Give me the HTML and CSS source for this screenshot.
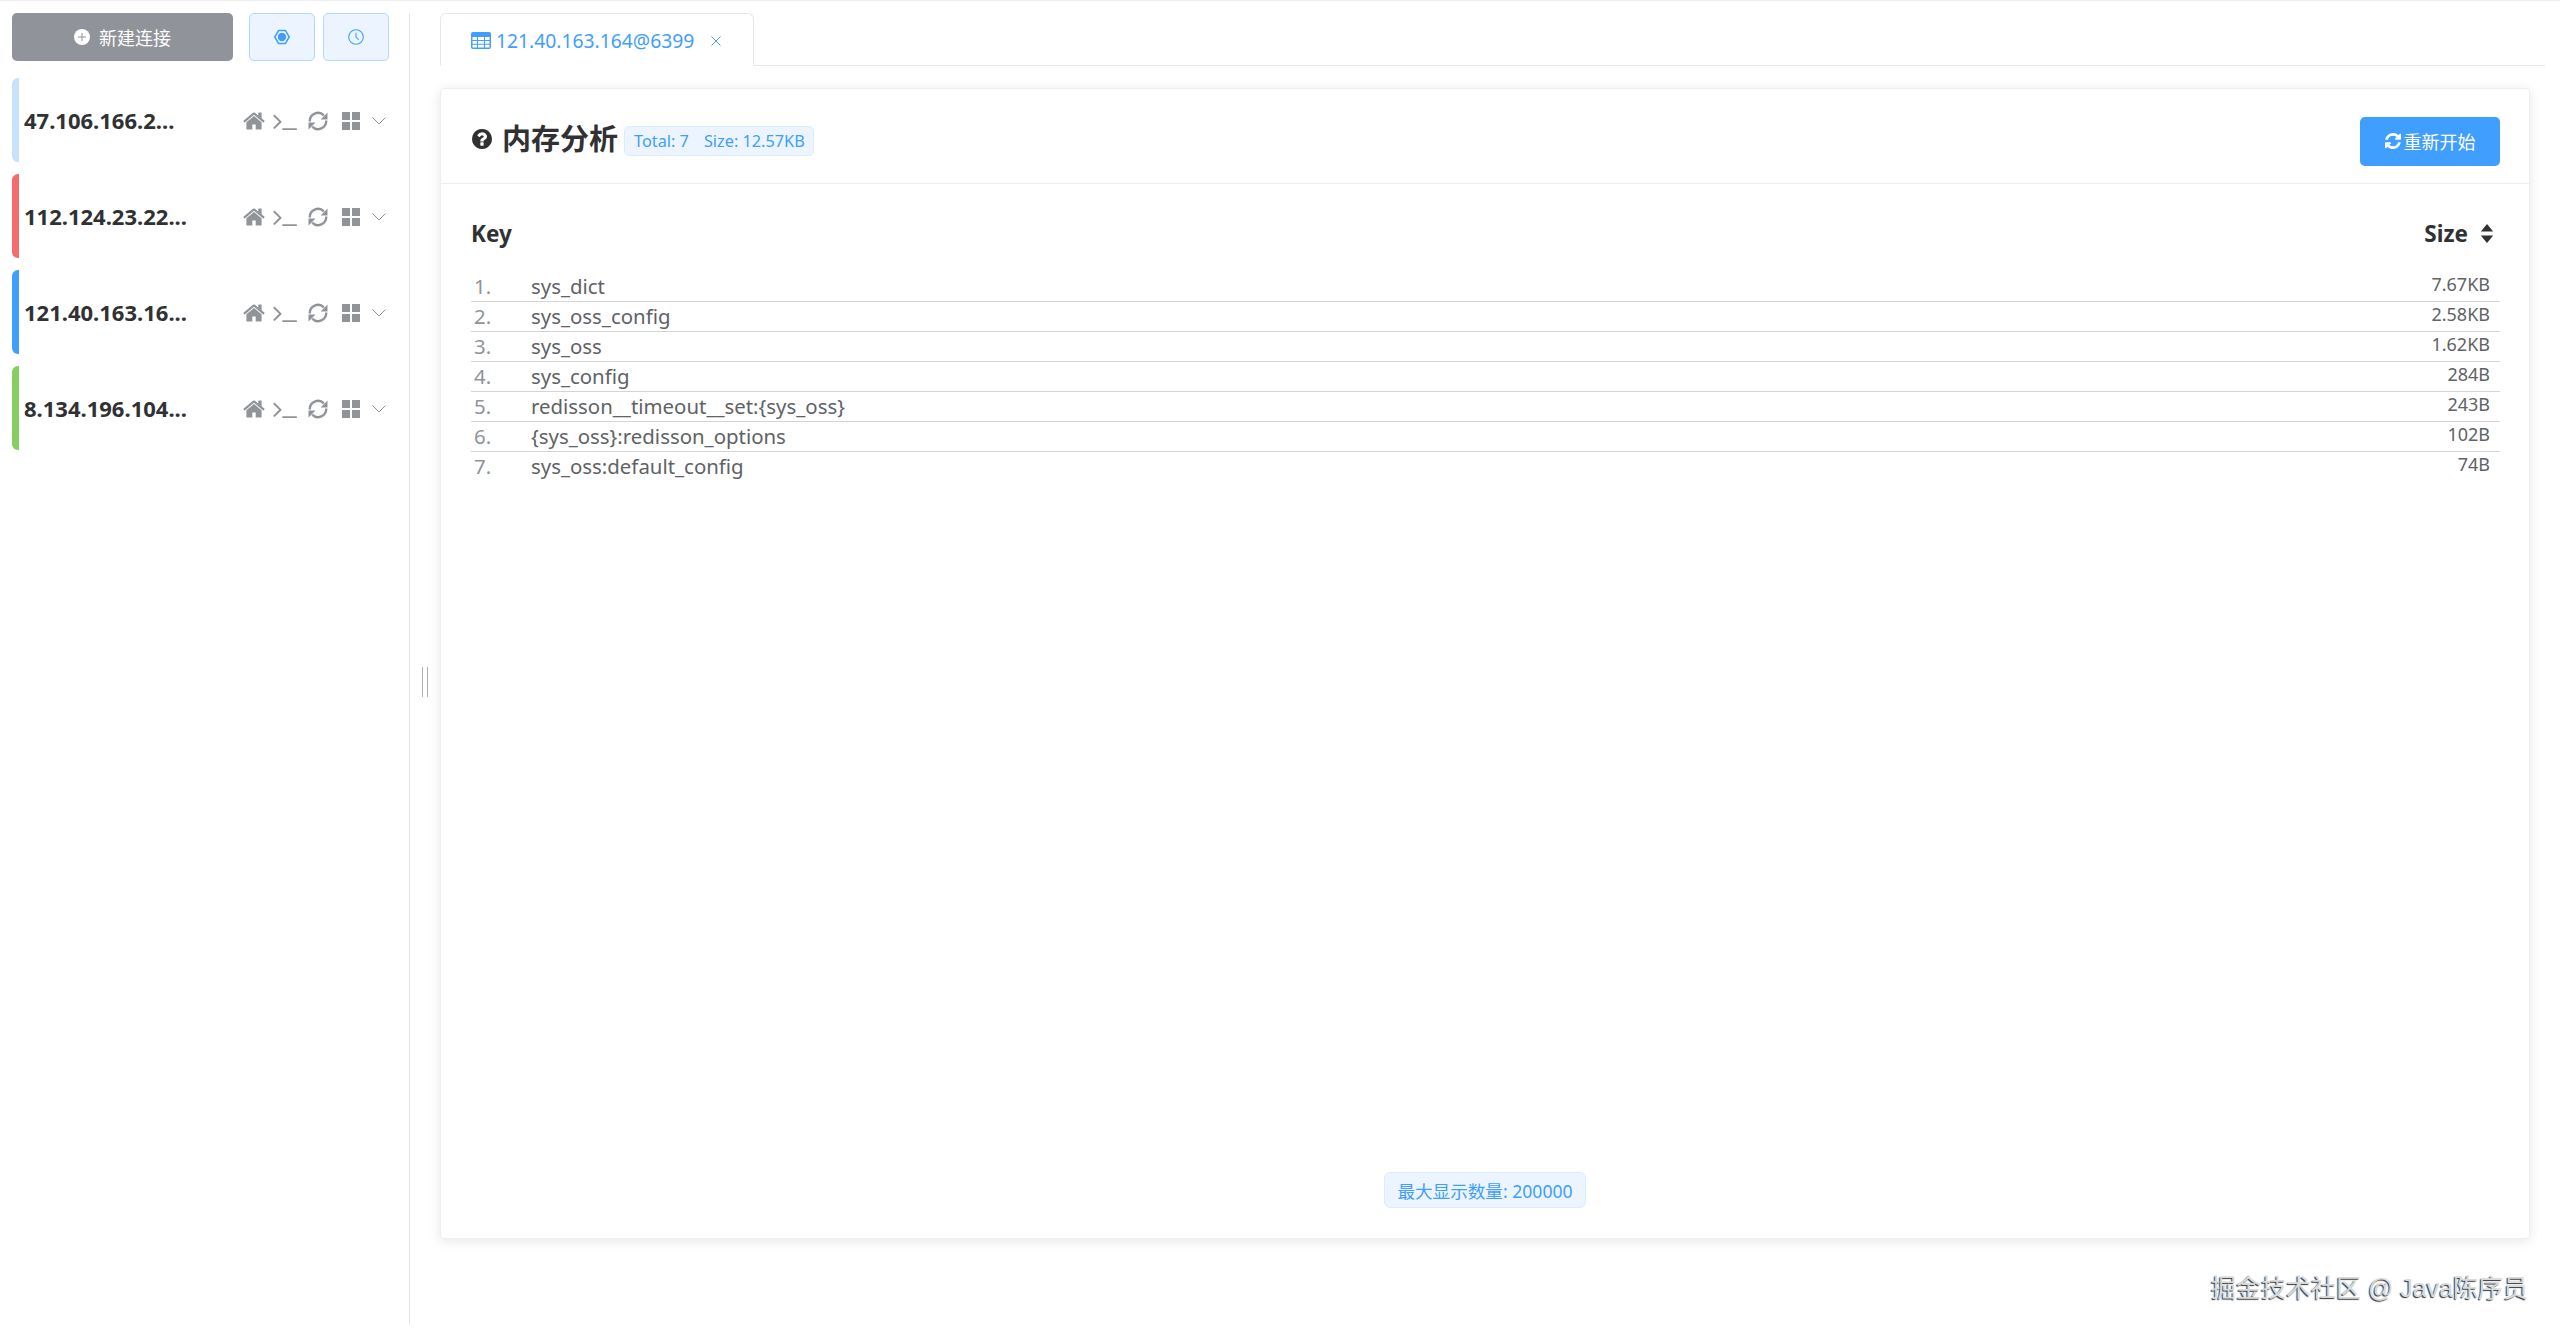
FILE: index.html
```html
<!DOCTYPE html>
<html lang="zh-CN">
<head>
<meta charset="utf-8">
<title>内存分析</title>
<link rel="stylesheet" href="styles.css">
</head>
<body>
<svg class="sprite" aria-hidden="true">
  <symbol id="i-home" viewBox="0 0 1664 1792"><path d="M1408 992v480q0 26-19 45t-45 19h-384v-384h-256v384h-384q-26 0-45-19t-19-45v-480q0-1 .5-3t.5-3l575-474 575 474q1 2 1 6zm223-69l-62 74q-8 9-21 11h-3q-13 0-21-7l-692-577-692 577q-12 8-24 7-13-2-21-11l-62-74q-8-10-7-23.500t11-21.500l719-599q32-26 76-26t76 26l244 204v-195q0-14 9-23t23-9h192q14 0 23 9t9 23v408l219 182q10 8 11 21.500t-7 23.500z"/></symbol>
  <symbol id="i-term" viewBox="0 200 1664 1400"><path d="M585 983l-466 466q-10 10-23 10t-23-10l-50-50q-10-10-10-23t10-23l393-393-393-393q-10-10-10-23t10-23l50-50q10-10 23-10t23 10l466 466q10 10 10 23t-10 23zm1079 457v64q0 14-9 23t-23 9h-960q-14 0-23-9t-9-23v-64q0-14 9-23t23-9h960q14 0 23 9t9 23z"/></symbol>
  <symbol id="i-reload" viewBox="0 0 20 20"><path d="M1.800 10.500A8.200 8.200 0 0 1 15.800 4.300M18.200 9.500A8.200 8.200 0 0 1 4.200 15.700" fill="none" stroke="currentColor" stroke-width="2.400"/><path d="M19.500 1.500v7h-7zM.5 18.500v-7h7z"/></symbol>
  <symbol id="i-grid" viewBox="0 0 18 18"><path d="M0 0h8v8H0zM10 0h8v8h-8zM0 10h8v8H0zM10 10h8v8h-8z"/></symbol>
  <symbol id="i-chev" viewBox="0 0 14 8"><path d="M.5.500L7 7l6.500-6.500" fill="none" stroke="currentColor" stroke-width="1"/></symbol>
  <symbol id="i-sync" viewBox="0 128 1536 1536"><path d="M1511 1056q0 5-1 7-64 268-268 434.500t-478 166.500q-146 0-282.500-55t-243.500-157l-129 129q-19 19-45 19t-45-19-19-45v-448q0-26 19-45t45-19h448q26 0 45 19t19 45-19 45l-137 137q71 66 161 102t187 36q134 0 250-65t186-179q11-17 53-117 8-23 30-23h192q13 0 22.500 9.500t9.500 22.500zm25-800v448q0 26-19 45t-45 19h-448q-26 0-45-19t-19-45 19-45l138-138q-148-137-349-137-134 0-250 65t-186 179q-11 17-53 117-8 23-30 23h-199q-13 0-22.500-9.500t-9.500-22.500v-7q65-268 270-434.500t480-166.500q146 0 284 55.500t245 156.500l130-129q19-19 45-19t45 19 19 45z"/></symbol>
</svg>
<div class="app">
  <aside class="sidebar">
    <div class="toolbar">
      <button class="btn-new">
        <svg class="ic-plus" viewBox="0 0 16 16"><circle cx="8" cy="8" r="8" fill="#fff"/><path d="M8 4v8M4 8h8" stroke="#909399" stroke-width="1"/></svg>
        <span>新建连接</span>
      </button>
      <button class="btn-light">
        <svg class="ic-16" viewBox="0 0 16 16"><path d="M4.500 1.600h7L15.200 8l-3.700 6.400h-7L.800 8z" fill="none" stroke="#409eff" stroke-width="1.500" stroke-linejoin="round"/><circle cx="8" cy="8" r="4.200" fill="#409eff"/></svg>
      </button>
      <button class="btn-light">
        <svg class="ic-16" viewBox="0 0 16 16" fill="none" stroke="#409eff" stroke-width="1.100"><circle cx="8" cy="8" r="7.300"/><path d="M8 3.800V8.300L10.800 10.600"/></svg>
      </button>
    </div>
    <div class="conn c-sky">
      <span class="conn-name">47.106.166.2...</span>
      <div class="acts"><svg class="a-home"><use href="#i-home"/></svg><svg class="a-term"><use href="#i-term"/></svg><svg class="a-reload"><use href="#i-reload"/></svg><svg class="a-grid"><use href="#i-grid"/></svg><svg class="a-chev"><use href="#i-chev"/></svg></div>
    </div>
    <div class="conn c-red">
      <span class="conn-name">112.124.23.22...</span>
      <div class="acts"><svg class="a-home"><use href="#i-home"/></svg><svg class="a-term"><use href="#i-term"/></svg><svg class="a-reload"><use href="#i-reload"/></svg><svg class="a-grid"><use href="#i-grid"/></svg><svg class="a-chev"><use href="#i-chev"/></svg></div>
    </div>
    <div class="conn c-blue">
      <span class="conn-name">121.40.163.16...</span>
      <div class="acts"><svg class="a-home"><use href="#i-home"/></svg><svg class="a-term"><use href="#i-term"/></svg><svg class="a-reload"><use href="#i-reload"/></svg><svg class="a-grid"><use href="#i-grid"/></svg><svg class="a-chev"><use href="#i-chev"/></svg></div>
    </div>
    <div class="conn c-green">
      <span class="conn-name">8.134.196.104...</span>
      <div class="acts"><svg class="a-home"><use href="#i-home"/></svg><svg class="a-term"><use href="#i-term"/></svg><svg class="a-reload"><use href="#i-reload"/></svg><svg class="a-grid"><use href="#i-grid"/></svg><svg class="a-chev"><use href="#i-chev"/></svg></div>
    </div>
  </aside>
  <div class="resizer"><i></i></div>
  <main class="main">
    <div class="tabs">
      <div class="tab">
        <svg class="ic-table" viewBox="0 0 20 17"><path fill-rule="evenodd" d="M2 0h16a2 2 0 0 1 2 2v13a2 2 0 0 1-2 2H2a2 2 0 0 1-2-2V2a2 2 0 0 1 2-2zM1.500 5v3h4.500V5zM7 5v3h6V5zM14 5v3h4.500V5zM1.500 9v2.800h4.500V9zM7 9v2.800h6V9zM14 9v2.800h4.500V9zM1.500 12.800v2.700h4.500v-2.700zM7 12.800v2.700h6v-2.700zM14 12.800v2.700h4.500v-2.700z"/></svg>
        <span class="tab-text">121.40.163.164@6399</span>
        <svg class="ic-close" viewBox="0 0 10 10"><path d="M.5.500l9 9M9.500.500l-9 9" stroke="currentColor" stroke-width="1" fill="none"/></svg>
      </div>
    </div>
    <section class="card">
      <header class="card-head">
        <div class="title">
          <svg class="ic-help" viewBox="128 128 1536 1536"><path d="M1024 1376v-192q0-14-9-23t-23-9h-192q-14 0-23 9t-9 23v192q0 14 9 23t23 9h192q14 0 23-9t9-23zm256-672q0-88-55.500-163t-138.500-116-170-41q-243 0-371 213-15 24 8 42l132 100q7 6 19 6 16 0 25-12 53-68 86-92 34-24 86-24 48 0 85.500 26t37.500 59q0 38-20 61t-68 45q-63 28-115.500 86.500t-52.500 125.500v36q0 14 9 23t23 9h192q14 0 23-9t9-23q0-19 21.500-49.500t54.500-49.500q32-18 49-28.500t46-35 44.500-48 28-60.500 12.500-81zm384 192q0 209-103 385.500t-279.500 279.500-385.500 103-385.500-103-279.500-279.500-103-385.500 103-385.500 279.500-279.500 385.500-103 385.500 103 279.500 279.500 103 385.500z"/></svg>
          <h1>内存分析</h1>
          <span class="tag tag-total"><span>Total: 7</span><span>Size: 12.57KB</span></span>
        </div>
        <button class="btn-primary"><svg class="ic-sync"><use href="#i-sync"/></svg><span>重新开始</span></button>
      </header>
      <div class="card-body">
        <div class="thead">
          <span>Key</span>
          <span class="th-size">Size<svg class="ic-sort" viewBox="0 0 14 20"><path d="M7 0l6.500 8H.5zM7 20L.5 12h13z"/></svg></span>
        </div>
        <ol class="rows">
          <li class="row"><span class="num">1.</span><span class="key">sys_dict</span><span class="size">7.67KB</span></li>
          <li class="row"><span class="num">2.</span><span class="key">sys_oss_config</span><span class="size">2.58KB</span></li>
          <li class="row"><span class="num">3.</span><span class="key">sys_oss</span><span class="size">1.62KB</span></li>
          <li class="row"><span class="num">4.</span><span class="key">sys_config</span><span class="size">284B</span></li>
          <li class="row"><span class="num">5.</span><span class="key">redisson__timeout__set:{sys_oss}</span><span class="size">243B</span></li>
          <li class="row"><span class="num">6.</span><span class="key">{sys_oss}:redisson_options</span><span class="size">102B</span></li>
          <li class="row"><span class="num">7.</span><span class="key">sys_oss:default_config</span><span class="size">74B</span></li>
        </ol>
      </div>
      <div class="card-foot"><span class="tag tag-max">最大显示数量: 200000</span></div>
    </section>
  </main>
</div>
<div class="watermark">掘金技术社区 @ Java陈序员</div>
</body>
</html>
```
FILE: styles.css
```css
* { box-sizing: border-box; }
html, body { margin: 0; padding: 0; background: #fff; }
body {
  font-family: "Noto Sans", "Noto Sans CJK SC", sans-serif;
  color: #303133;
  border-top: 1px solid #eeeeee;
  height: 1335px;
  overflow: hidden;
  position: relative;
}
.sprite { display: none; }
button { font-family: inherit; cursor: pointer; margin: 0; padding: 0; }

.app { display: flex; height: 1334px; }

.sidebar {
  width: 410px;
  flex: none;
  margin-top: 12px;
  height: 1312px;
  padding-left: 12px;
  padding-right: 20px;
  border-right: 1px solid #e6e6e6;
}
.toolbar { display: flex; height: 48px; margin-bottom: 17px; }
.btn-new {
  width: 221px;
  height: 48px;
  background: #909399;
  border: 0;
  border-radius: 5px;
  color: #fff;
  font-size: 18px;
  display: flex;
  align-items: center;
  justify-content: center;
  gap: 9px;
  margin-right: 16px;
}
.ic-plus { width: 16px; height: 16px; }
.btn-light {
  width: 66px;
  height: 48px;
  background: #ecf5ff;
  border: 1px solid #b3d8ff;
  border-radius: 5px;
  margin-right: 8px;
  display: flex;
  align-items: center;
  justify-content: center;
}
.btn-light:last-child { margin-right: 0; }
.ic-16 { width: 16px; height: 16px; }

.conn {
  height: 84px;
  margin-bottom: 12px;
  border-left: 7px solid #ccc;
  border-radius: 6px 0 0 6px;
  display: flex;
  align-items: center;
  padding-left: 5px;
}
.c-sky { border-left-color: #c6e2ff; }
.c-red { border-left-color: #f56c6c; }
.c-blue { border-left-color: #409eff; }
.c-green { border-left-color: #85ce61; }
.conn-name { font-size: 22px; font-weight: 700; color: #303133; white-space: nowrap; }
.acts { margin-left: auto; display: flex; align-items: center; color: #909399; fill: #909399; padding: 1px 3px 0 0; }
.a-home { width: 22px; height: 24px; margin-right: 8px; }
.a-term { width: 24px; height: 20px; margin-right: 11px; }
.a-reload { width: 20px; height: 20px; margin-right: 14px; }
.a-grid { width: 18px; height: 18px; margin-right: 12px; }
.a-chev { width: 14px; height: 8px; }

.resizer { width: 30px; flex: none; display: flex; align-items: center; justify-content: center; padding-top: 28px; }
.resizer i {
  display: block;
  width: 6px;
  height: 30px;
  margin-left: -1px;
  border-left: 1px solid #b0b0b0;
  border-right: 1px solid #b0b0b0;
}

.main { flex: 1; min-width: 0; padding: 12px 15px 0 0; display: flex; flex-direction: column; }
.tabs { height: 53px; border-bottom: 1px solid #e4e7ed; display: flex; margin-bottom: 22px; flex: none; }
.tab {
  width: 314px;
  height: 53px;
  border: 1px solid #e4e7ed;
  border-bottom: 1px solid #fff;
  border-radius: 6px 6px 0 0;
  display: flex;
  align-items: center;
  padding-left: 30px;
  padding-top: 2px;
  color: #409eff;
  fill: #409eff;
}
.ic-table { width: 20px; height: 17px; margin-right: 5px; }
.tab-text { font-size: 19.3px; }
.ic-close { width: 10px; height: 10px; margin-left: 17px; }

.card {
  width: 2090px;
  height: 1151px;
  flex: none;
  border: 1px solid #ebeef5;
  border-radius: 4px;
  box-shadow: 0 2px 12px rgba(0, 0, 0, .1);
  display: flex;
  flex-direction: column;
}
.card-head {
  height: 95px;
  flex: none;
  border-bottom: 1px solid #ebeef5;
  padding: 28px 29px 0 31px;
  display: flex;
  justify-content: space-between;
  align-items: flex-start;
}
.title { display: flex; align-items: center; height: 44px; }
.ic-help { width: 20px; height: 20px; fill: #303133; margin-right: 10px; }
h1 { margin: 0 6px 0 0; font-size: 29px; font-weight: 700; line-height: 42px; }
.tag {
  background: #ecf5ff;
  border: 1px solid #d9ecff;
  border-radius: 5px;
  color: #409eff;
  font-size: 16.3px;
  height: 30px;
  display: inline-flex;
  align-items: center;
  white-space: nowrap;
}
.tag-total { padding: 0 8px 0 9px; gap: 15px; margin-top: 4px; }
.btn-primary {
  width: 140px;
  height: 49px;
  background: #409eff;
  border: 0;
  border-radius: 5px;
  color: #fff;
  fill: #fff;
  font-size: 18px;
  display: flex;
  align-items: center;
  justify-content: center;
  gap: 3px;
  padding-bottom: 2px;
}
.ic-sync { width: 16px; height: 16px; }

.card-body { flex: 1; padding: 0 29px 0 30px; min-height: 0; }
.thead {
  height: 88px;
  display: flex;
  justify-content: space-between;
  align-items: center;
  font-size: 22.5px;
  font-weight: 700;
  padding-right: 6px;
  padding-top: 11px;
}
.th-size { display: flex; align-items: center; }
.ic-sort { width: 14px; height: 19px; margin-left: 12px; fill: #303133; }
.rows { list-style: none; margin: 0; padding: 0; }
.row {
  height: 30px;
  display: flex;
  align-items: center;
  font-size: 20.4px;
  color: #606266;
  border-bottom: 1px solid #d4d4d4;
  padding-right: 10px;
}
.row:last-child { border-bottom: 0; }
.num { width: 60px; flex: none; padding-left: 3px; color: #909399; position: relative; top: -1px; }
.key { flex: 1; position: relative; top: -1px; }
.size { font-size: 18px; position: relative; top: -3px; }

.card-foot { flex: none; display: flex; justify-content: center; padding-bottom: 30px; }
.tag-max { height: 36px; padding: 0 12px; font-size: 17.6px; border-radius: 6px; }

.watermark {
  position: absolute;
  left: 2211px;
  top: 1267px;
  font-family: "Liberation Sans", "Noto Sans CJK SC", sans-serif;
  font-size: 25px;
  color: #dadada;
  text-shadow: -1px 1px 1px #333;
  white-space: nowrap;
}
```
